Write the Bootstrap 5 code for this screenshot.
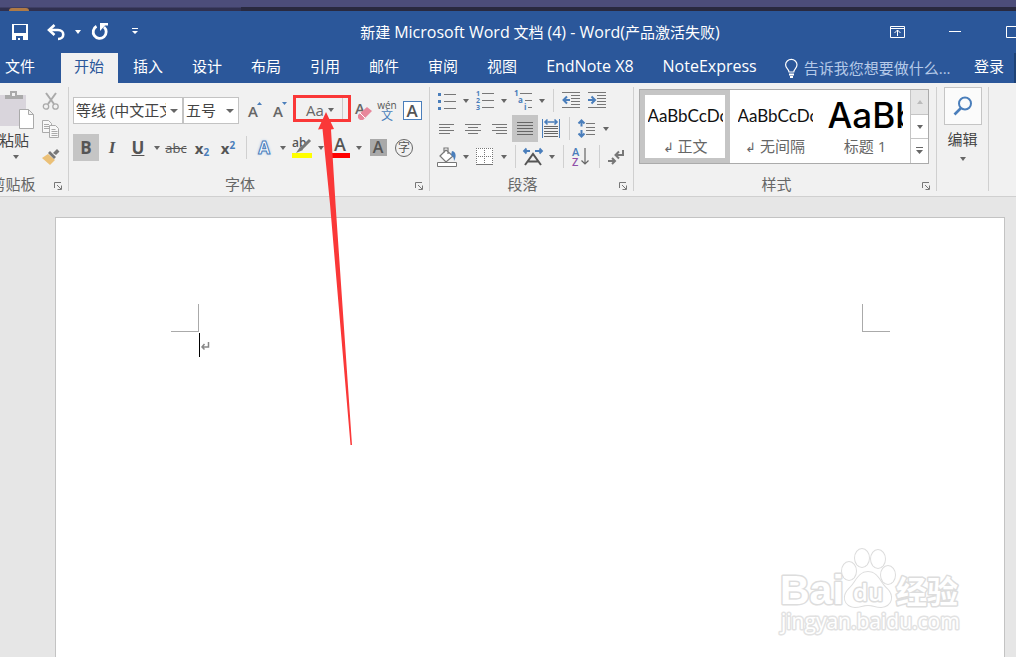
<!DOCTYPE html>
<html lang="zh-CN">
<head>
<meta charset="utf-8">
<meta name="viewport" content="width=device-width, initial-scale=1">
<title>新建 Microsoft Word 文档 (4) - Word</title>
<link href="https://cdn.jsdelivr.net/npm/bootstrap@5.3.0/dist/css/bootstrap.min.css" rel="stylesheet">
<style>
:root{--blue:#2b579a;--ink:#666;--accent:#4a7ebb;--line:#d4d4d4}
body{font:15px/20px "Open Sans","Noto Sans CJK SC",sans-serif;background:#e6e6e6;color:#444;overflow-x:hidden}
button,a,select{white-space:nowrap}
button{background:none;border:0;padding:0;color:inherit;display:inline-flex;align-items:center;justify-content:center;flex:none}
svg{display:block;flex:none;overflow:visible}
.latin{font-size:16px}
.desk{height:11px;background:linear-gradient(#4c4d7a 0 7px,#30304f 8px)}
.desk i{width:20px;height:3px;margin-left:9px;background:#b07a45;border-radius:10px 10px 0 0}
.desk b{margin-left:212px;height:4px;background:#29293f}
.titlebar{height:42px;background:var(--blue);color:#fff;overflow:hidden}
.quick{width:211px}
.quick button,.tool{height:27px}
.quick .qbtn{width:32px}
.winctl{margin-right:-24px}
.winctl button{width:57px;height:42px}
.tabs{height:30px;background:var(--blue);overflow:hidden;gap:2px}
.tabs a{color:#fff;text-decoration:none;padding:3px 14px 7px 13px;flex:none;height:30px}
.tabs a.filetab{width:59px;padding-left:5px;padding-right:0}
.tabs a.current{background:#f1f1f1;color:var(--blue)}
.tabs a.signin{padding:3px 8px 7px 4px}
.tabs .edge{width:2px;background:#1e4377}
.tellbox{margin-left:12px}
.tell{color:#b5c9e8;background:none;border:0;padding:0;width:152px;flex:none}
.tell::placeholder{color:#b5c9e8;opacity:1}
.ribbon{background:#f1f1f1;border-bottom:1px solid #d0d0d0;padding:4px 0 5px}
.group{height:104px;border-right:1px solid #d0d0d0;flex:none}
.gbody{height:90px}
.glabel{line-height:14px;color:var(--ink)}
.glabel span{padding-right:8px}
.glabel button{width:8px;height:8px;margin-right:6px;margin-top:5px}
.g-clip{width:89px;margin-left:-20px}
.g-font{width:361px;padding-left:4px}
.g-para{width:204px;padding-left:4px}
.g-style{width:303px;padding-left:5px}
.g-edit{width:52px}
.fontrow{padding-top:10px;padding-bottom:10px}
.stack3{gap:1px}
.tool{width:26px;color:#555}
.tool.slim{width:24px}
.tool.on{background:#c5c5c5}
.drop{width:12px;height:27px}
.drop::before,.dn::before{content:"";display:block;border:3px solid transparent;border-top:4px solid #666;border-bottom:0}
.quick .drop::before{border-top-color:#fff}
.rule{width:10px;height:23px;flex:none;background:linear-gradient(#d0d0d0,#d0d0d0) center/1px 100% no-repeat}
.combo{appearance:none;height:27px;border:1px solid #c3c3c3;border-radius:0;color:#444;padding:0 16px 2px 2px;background:#fff url("data:image/svg+xml,%3Csvg xmlns='http://www.w3.org/2000/svg' width='8' height='4'%3E%3Cpath d='M0 0h8L4 4z' fill='%23666'/%3E%3C/svg%3E") no-repeat right 4px center;overflow:hidden}
.fname{width:110px}.fsize{width:56px}
.gl{font-weight:700;font-size:17px;line-height:20px}
.sm{font-size:13px}
.idx{color:#4a7ebb;font-size:10px}
.glow{color:#fff;-webkit-text-stroke:1px #4a7ebb;text-shadow:0 0 3px #7fb2ea}
.callout{width:58px;height:27px}
.callout button{padding-bottom:2px}
.callout svg{top:-2px;left:0;pointer-events:none;z-index:5}
.boxed{width:19px;height:19px;border:1px solid var(--accent);background:#fff;line-height:17px;font-size:17px;font-weight:600}
.shade{width:17px;height:17px;background:#a9a9a9;line-height:17px;font-size:16px;font-weight:600}
.ring{width:18px;height:18px;border:1px solid #666;border-radius:50%;font-size:12px;line-height:15px}
.wen{font-size:10px;line-height:10px}
.wen span{font-size:12px;line-height:12px;color:var(--accent)}
.gallery{height:75px;width:290px;border:1px solid #ababab;background:#fff}
.sty{width:90px;height:73px;padding:3px 2px 0;flex-direction:column;border:5px solid transparent;color:var(--ink)}
.sty.on{border-color:#c5c5c5}
.sty .demo{width:75px;height:36px;line-height:36px;overflow:hidden;text-align:left;color:#111;font-family:Lato,sans-serif;font-size:17px}
.sty .demo.big{font:500 35px/34px Inter,sans-serif;color:#000}
.sty .cap{height:24px;line-height:24px}
.scroller{width:18px;border-left:1px solid #c5c5c5}
.scroller button{height:24px;flex:1 1 0;border-bottom:1px solid #c5c5c5}
.find{width:38px;height:38px;border:1px solid #c5c5c5;background:#fbfbfb}
.sheet{margin:20px 11px 0 55px;border:1px solid #c3c3c3;border-bottom:0;background:#fff}
.corners{padding:86px 114px 0 115px}
.corners i{width:28px;height:28px;border:solid #aaa;border-width:0 1px 1px 0}
.corners i+i{border-width:0 0 1px 1px}
.para{margin:1px 0 0 143px;border-left:1px solid #000;height:24px;line-height:26px}
.water{right:40px;bottom:18px;paint-order:stroke}
</style>
</head>
<body class="d-flex flex-column min-vh-100">
<div class="desk d-flex align-items-end"><i></i><b class="flex-fill"></b></div>

<header class="titlebar d-flex align-items-center">
  <div class="quick d-flex align-items-center ps-1 flex-shrink-0">
    <button class="qbtn" aria-label="保存"><svg width="16" height="16" shape-rendering="crispEdges"><path fill="#fff" fill-rule="evenodd" d="M0 0h16v16H0zM2 1v8h12V1zM4 12v4h2v-2h2v2h3v-4z"/></svg></button>
    <button class="qbtn ms-1" aria-label="撤消"><svg width="18" height="17" fill="none" stroke="#fff"><path stroke-width="2.600" d="M2 6h9c7 0 7 9 0 9"/><path stroke-width="2.600" d="M7.500 1 2 6l5.500 5"/></svg></button>
    <button class="drop" aria-label="撤消选项"></button>
    <button class="qbtn" aria-label="重复"><svg width="18" height="18" fill="none" stroke="#fff" stroke-width="2.800"><path d="M5.500 3.200A6.500 6.500 0 1 0 13 4"/><path fill="#fff" stroke="none" d="M9 0h8v2.500h-3L9 8z"/></svg></button>
    <button class="ms-3" aria-label="自定义快速访问工具栏"><svg width="7" height="8" fill="#fff"><path d="M0 0h6v1H0zM0 3h6L3 6z"/></svg></button>
  </div>
  <div class="flex-fill text-center text-nowrap">新建 <span class="latin">Microsoft Word</span> 文档 <span class="latin">(4) - Word(</span>产品激活失败<span class="latin">)</span></div>
  <div class="winctl d-flex flex-shrink-0">
    <button aria-label="功能区显示选项"><svg width="15" height="12" fill="none" stroke="#fff"><path d="M.5.5h14v11H.5zM0 2.500h15M7.500 10V4M4.500 7l3-3 3 3"/></svg></button>
    <button aria-label="最小化"><svg width="12" height="3" fill="#fff"><path d="M0 0h12v1H0z"/></svg></button>
    <button aria-label="最大化"><svg width="12" height="12" fill="none" stroke="#fff"><path d="M.5.5h11v11H.5z"/></svg></button>
  </div>
</header>

<nav class="tabs d-flex">
  <a class="filetab" href="#">文件</a><a class="current" href="#">开始</a><a href="#">插入</a><a href="#">设计</a><a href="#">布局</a><a href="#">引用</a><a href="#">邮件</a><a href="#">审阅</a><a href="#">视图</a><a class="latin" href="#">EndNote X8</a><a class="latin" href="#">NoteExpress</a>
  <label class="tellbox d-flex align-items-center flex-shrink-0" for="tell"><svg width="17" height="19" fill="none" stroke="#fff" stroke-width="1.200"><path d="M4 13c0-3-3.400-3.500-3.400-7.200a5.700 5.400 0 0 1 11.400 0C12 9.500 8.800 10 8.800 13z"/><path stroke-width="2" d="M4 15.500h5M5 18h3"/></svg></label>
  <input class="tell" id="tell" placeholder="告诉我您想要做什么..." aria-label="告诉我您想要做什么">
  <a href="#" class="signin ms-auto">登录</a><span class="edge"></span>
</nav>

<section class="ribbon d-flex">
  <div class="group g-clip d-flex flex-column">
    <div class="gbody d-flex justify-content-end">
      <button class="flex-column justify-content-start pt-1">
        <svg width="48" height="38"><path fill="#d9d5dc" d="M4 4h36v31H4z"/><path fill="#aaa" d="M19 4h5V0h7v4h6v4H19z"/><path fill="#f1f1f1" d="M26 2h3v3h-3z"/><path fill="#fff" stroke="#aaa" d="M33.500 18.500h9l5 5v14h-14zM42.500 18.500v5h5"/></svg>
        <span class="ps-2 pt-1" style="line-height:14px">粘贴</span><span class="dn ps-2 ms-1 mt-2"></span>
      </button>
      <div class="d-flex flex-column stack3 ms-1 me-1">
        <button class="tool" aria-label="剪切"><svg width="18" height="18" fill="none" stroke="#aaa"><path stroke-width="2" d="M4 1l8 11M14 1L6 12"/><circle cx="4" cy="14.500" r="2.700" stroke-width="1.300"/><circle cx="13.500" cy="14.500" r="2.700" stroke-width="1.300"/></svg></button>
        <button class="tool" aria-label="复制"><svg width="18" height="18" fill="#f8f8f8" stroke="#aaa"><path d="M.5.5h6l3 3v9h-9zM2 4.500h5M2 6.500h6M2 8.500h5"/><path d="M7.500 5.500h6l3 3v9h-9zM9.500 9.500h4M9.500 11.500h6M9.500 13.500h6M9.500 15.500h6"/></svg></button>
        <button class="tool" aria-label="格式刷"><svg width="18" height="16"><path fill="#ebc077" d="M0 9l6-4 7 6-5 5z"/><path fill="#777" d="M6 4l2-2 6 6-2 2zM11 4l4-4 2.500 2.500L14 6z"/></svg></button>
      </div>
    </div>
    <div class="glabel d-flex"><span class="flex-fill text-center">剪贴板</span><button aria-label="剪贴板设置"><svg width="8" height="8" fill="none" stroke="#777"><path d="M.5 6V.5H7M3 3l4 4M7.500 3.500v4h-4"/></svg></button></div>
  </div>

  <div class="group g-font d-flex flex-column">
    <div class="gbody">
      <div class="fontrow d-flex align-items-center">
        <select class="combo fname" aria-label="字体"><option>等线 (中文正文)</option></select>
        <select class="combo fsize" aria-label="字号"><option>五号</option></select>
        <button class="tool ms-1" aria-label="增大字号"><svg width="16" height="17"><text x="0" y="15" font-size="15" font-weight="600" fill="#666">A</text><path fill="#4a7ebb" d="M9 3h5l-2.500-3z"/></svg></button>
        <button class="tool slim" aria-label="减小字号"><svg width="16" height="17"><text x="0" y="15" font-size="15" font-weight="600" fill="#666">A</text><path fill="#4a7ebb" d="M9 0h5l-2.500 3z"/></svg></button>
        <div class="callout position-relative d-flex">
          <button class="w-100 pe-1" aria-label="更改大小写"><span style="color:#666">Aa</span><span class="dn ms-1"></span></button>
          <svg class="position-absolute" width="60" height="352"><path d="M49.500 3v21" stroke="#ccc"/><path d="M1.500 1.500h55v24h-55z" fill="none" stroke="#fa3838" stroke-width="3"/><path fill="#fa3838" d="M33 17l8 17-3 .5 4.500 74L59 350h-1.500L37 109 29.500 34l-4.500.5z"/></svg>
        </div>
        <button class="tool slim" aria-label="清除所有格式"><svg width="17" height="20"><text x="0" y="13" font-size="15" font-weight="600" fill="#666">A</text><path fill="#e8879b" d="M3 14l9-8 5 4-9 9h-3l-2-2z"/><path stroke="#fff" d="M5 12l5 5"/></svg></button>
        <button class="tool slim flex-column wen">wén<span>文</span></button>
        <button class="tool"><span class="boxed">A</span></button>
      </div>
      <div class="d-flex align-items-center">
        <button class="tool on gl">B</button><button class="tool gl fst-italic" style="font-family:'Liberation Serif',serif">I</button><button class="tool gl text-decoration-underline">U</button><button class="drop" aria-label="下划线选项"></button>
        <button class="tool sm text-decoration-line-through">abc</button>
        <button class="tool fw-bold"><span>x<sub class="idx">2</sub></span></button><button class="tool fw-bold"><span>x<sup class="idx">2</sup></span></button>
        <span class="rule"></span>
        <button class="tool gl glow">A</button><button class="drop" aria-label="文本效果选项"></button>
        <button class="tool" aria-label="突出显示"><svg width="20" height="20"><text x="0" y="9" font-size="12" font-weight="600" fill="#555">ab</text><path stroke="#777" stroke-width="3" d="M18 2l-9 9"/><path fill="#777" d="M8 9l3 3-7 3z"/><path fill="#ff0" d="M0 15h20v5H0z"/></svg></button><button class="drop" aria-label="突出显示选项"></button>
        <button class="tool" aria-label="字体颜色"><svg width="20" height="20"><text x="4" y="13" font-size="18" font-weight="600" fill="#555">A</text><path fill="red" d="M0 15h20v5H0z"/></svg></button><button class="drop" aria-label="字体颜色选项"></button>
        <button class="tool"><span class="shade">A</span></button><button class="tool"><span class="ring">字</span></button>
      </div>
    </div>
    <div class="glabel d-flex"><span class="flex-fill text-center">字体</span><button aria-label="字体设置"><svg width="8" height="8" fill="none" stroke="#777"><path d="M.5 6V.5H7M3 3l4 4M7.500 3.500v4h-4"/></svg></button></div>
  </div>

  <div class="group g-para d-flex flex-column">
    <div class="gbody d-flex flex-column stack3">
      <div class="d-flex align-items-center">
        <button class="tool" aria-label="项目符号"><svg width="18" height="18"><path fill="#4a7ebb" d="M0 1h3v3H0zM0 8h3v3H0zM0 15h3v3H0z"/><path stroke="#777" d="M6 2.500h12M6 9.500h12M6 16.500h12"/></svg></button><button class="drop" aria-label="项目符号选项"></button>
        <button class="tool" aria-label="编号"><svg width="18" height="19"><g font-size="7" font-weight="700" fill="#4a7ebb"><text y="5">1</text><text y="12">2</text><text y="19">3</text></g><path stroke="#777" d="M6 2.500h12M6 9.500h12M6 16.500h12"/></svg></button><button class="drop" aria-label="编号选项"></button>
        <button class="tool" aria-label="多级列表"><svg width="18" height="19"><g font-size="8" font-weight="700" fill="#4a7ebb"><text y="5">1</text><text x="4" y="12">a</text><text x="10" y="19">i</text></g><path stroke="#777" d="M6 2.500h12M11 9.500h7M14 16.500h4"/></svg></button><button class="drop" aria-label="多级列表选项"></button>
        <span class="rule"></span>
        <button class="tool" aria-label="减少缩进量"><svg width="18" height="17" stroke="#777"><path d="M0 .5h18M9 3.500h9M9 6.500h9M9 9.500h9M9 12.500h9M0 15.500h18"/><path d="M8 8H2M5 4.500L1.500 8 5 11.500" fill="none" stroke="#4a7ebb" stroke-width="2"/></svg></button>
        <button class="tool" aria-label="增加缩进量"><svg width="18" height="17" stroke="#777"><path d="M0 .5h18M9 3.500h9M9 6.500h9M9 9.500h9M9 12.500h9M0 15.500h18"/><path d="M0 8h6M3.500 4.500L7 8l-3.500 3.500" fill="none" stroke="#4a7ebb" stroke-width="2"/></svg></button>
      </div>
      <div class="d-flex align-items-center">
        <button class="tool" aria-label="左对齐"><svg width="16" height="14" stroke="#777"><path d="M0 2.500h15M0 5.500h11M0 8.500h15M0 11.500h11"/></svg></button>
        <button class="tool" aria-label="居中"><svg width="16" height="14" stroke="#777"><path d="M0 2.500h16M3 5.500h10M0 8.500h16M3 11.500h10"/></svg></button>
        <button class="tool" aria-label="右对齐"><svg width="16" height="14" stroke="#777"><path d="M1 2.500h15M5 5.500h11M1 8.500h15M5 11.500h11"/></svg></button>
        <button class="tool on" aria-label="两端对齐"><svg width="16" height="14" stroke="#666"><path d="M0 .5h16M0 3.500h16M0 6.500h16M0 9.500h16M0 12.500h16"/></svg></button>
        <button class="tool" aria-label="分散对齐"><svg width="18" height="19"><path stroke="#4a7ebb" d="M.5 0v19M17.500 0v19"/><path stroke="#666" d="M2 7.500h14M2 9.500h14M2 12.500h14M2 14.500h14M2 17.500h14"/><path fill="none" stroke="#4a7ebb" stroke-width="1.600" d="M3 3h12M5.500.5L3 3l2.500 2.500M12.500.5L15 3l-2.500 2.500"/></svg></button>
        <span class="rule"></span>
        <button class="tool" aria-label="行距"><svg width="18" height="19"><path stroke="#777" d="M8 4.500h9M8 8.500h9M8 11.500h9M8 15.500h9"/><path fill="none" stroke="#4a7ebb" stroke-width="2" d="M3.500 1.500v6M3.500 11v6M.5 4.500l3-3 3 3M.5 14.500l3 3 3-3"/></svg></button><button class="drop" aria-label="行距选项"></button>
      </div>
      <div class="d-flex align-items-center">
        <button class="tool" aria-label="底纹"><svg width="20" height="20" fill="none"><path fill="#fff" stroke="#777" stroke-width="1.200" d="M3 9l6-6 7 6-7 6zM7 6V1h4v6"/><path fill="#4a7ebb" d="M15 4c5 1 4 7 2 10 0-3-1-5-3-6z"/><path fill="#fff" stroke="#777" d="M.5 15.500h19v4H.5z"/></svg></button><button class="drop" aria-label="底纹选项"></button>
        <button class="tool" aria-label="边框"><svg width="18" height="18" fill="none" stroke="#777"><path fill="#fff" stroke="none" d="M0 0h17v17H0z"/><path stroke-dasharray="1 1" d="M0 .5h17M.5 0v16M16.500 0v16M8.500 0v16M0 8.500h17"/><path d="M0 16.500h17"/></svg></button><button class="drop" aria-label="边框选项"></button>
        <span class="rule"></span>
        <button class="tool" aria-label="中文版式"><svg width="20" height="18" fill="none"><path stroke="#555" stroke-width="2" d="M2 17l8-11 8 11M5 13.500h10"/><path stroke="#4a7ebb" stroke-width="1.800" d="M7 3H1M3.500.5L1 3l2.500 2.500M12 3h7M16.500.5L19 3l-2.500 2.500"/></svg></button><button class="drop" aria-label="中文版式选项"></button>
        <span class="rule"></span>
        <button class="tool" aria-label="排序"><svg width="18" height="20"><text y="9" font-size="11" font-weight="600" fill="#4a7ebb">A</text><text y="19" font-size="11" font-weight="600" fill="#8f4fa8">Z</text><path fill="none" stroke="#666" stroke-width="1.200" d="M13 1v16M9.500 13.500L13 17l3.500-3.500"/></svg></button>
        <span class="rule"></span>
        <button class="tool" aria-label="显示编辑标记"><svg width="18" height="16" fill="none" stroke="#777" stroke-width="2"><path d="M15 1v5H8M11 2.500L7.500 6 11 9.500M0 12h7M4 9l3 3-3 3"/></svg></button>
      </div>
    </div>
    <div class="glabel d-flex"><span class="flex-fill text-center">段落</span><button aria-label="段落设置"><svg width="8" height="8" fill="none" stroke="#777"><path d="M.5 6V.5H7M3 3l4 4M7.500 3.500v4h-4"/></svg></button></div>
  </div>

  <div class="group g-style d-flex flex-column">
    <div class="gbody" style="padding-top:2px">
      <div class="gallery d-flex">
        <button class="sty on"><span class="demo">AaBbCcDc</span><span class="cap"><small>↲</small> 正文</span></button>
        <button class="sty"><span class="demo">AaBbCcDc</span><span class="cap"><small>↲</small> 无间隔</span></button>
        <button class="sty"><span class="demo big">AaBb</span><span class="cap">标题 1</span></button>
        <div class="scroller d-flex flex-column ms-auto">
          <button aria-label="向上" style="background:#e6e6e6"><svg width="6" height="4"><path d="M0 4h6L3 0z" fill="#bbb"/></svg></button>
          <button class="dn" aria-label="向下"></button>
          <button class="border-0" aria-label="其他"><svg width="7" height="8" fill="#666"><path d="M0 0h7v1H0zM0 3h7L3.500 7z"/></svg></button>
        </div>
      </div>
    </div>
    <div class="glabel d-flex"><span class="flex-fill text-center">样式</span><button aria-label="样式设置"><svg width="8" height="8" fill="none" stroke="#777"><path d="M.5 6V.5H7M3 3l4 4M7.500 3.500v4h-4"/></svg></button></div>
  </div>

  <div class="group g-edit d-flex flex-column align-items-center">
    <button class="flex-column"><span class="find d-flex align-items-center justify-content-center"><svg width="20" height="20" fill="none" stroke="#4a7ebb" stroke-width="2"><circle cx="12" cy="7.500" r="6"/><path stroke-width="2.600" d="M8 12l-6.500 6.500"/></svg></span><span class="pt-1">编辑</span><span class="dn mt-2"></span></button>
  </div>
</section>

<main class="sheet flex-fill position-relative">
  <div class="corners d-flex justify-content-between"><i></i><i></i></div>
  <div class="para"><svg width="10" height="26" fill="none" stroke="#888" stroke-width="1.500"><path d="M8.500 9v5H2M4.500 11L2 14l2.500 2.500"/></svg></div>
  <svg class="water position-absolute" width="188" height="96" fill="#fff" stroke="#ddd" stroke-width="3" stroke-linejoin="round" font-family="Open Sans,Noto Sans CJK SC,sans-serif">
    <text x="4" y="61" font-size="41" font-weight="700" font-family="Liberation Sans,sans-serif">Bai</text>
    <g stroke-width="2"><ellipse cx="73" cy="28" rx="7" ry="9"/><ellipse cx="86" cy="15" rx="7" ry="9"/><ellipse cx="102" cy="16" rx="7" ry="9"/><ellipse cx="112" cy="32" rx="7" ry="9"/>
    <path d="M92 29c10 0 12 11 19 17 7 7 5 17-6 18-5 0-8-2-13-2s-8 2-13 2c-11-1-13-11-6-18 7-6 9-17 19-17z"/></g>
    <text x="77" y="58" font-size="24" font-weight="600">du</text>
    <text x="120" y="60" font-size="31" font-weight="700">经验</text>
    <text x="5" y="86" font-size="21" font-weight="400" stroke="#e2e2e2">jingyan.baidu.com</text>
  </svg>
</main>
<script src="https://cdn.jsdelivr.net/npm/bootstrap@5.3.0/dist/js/bootstrap.bundle.min.js"></script>
</body>
</html>
